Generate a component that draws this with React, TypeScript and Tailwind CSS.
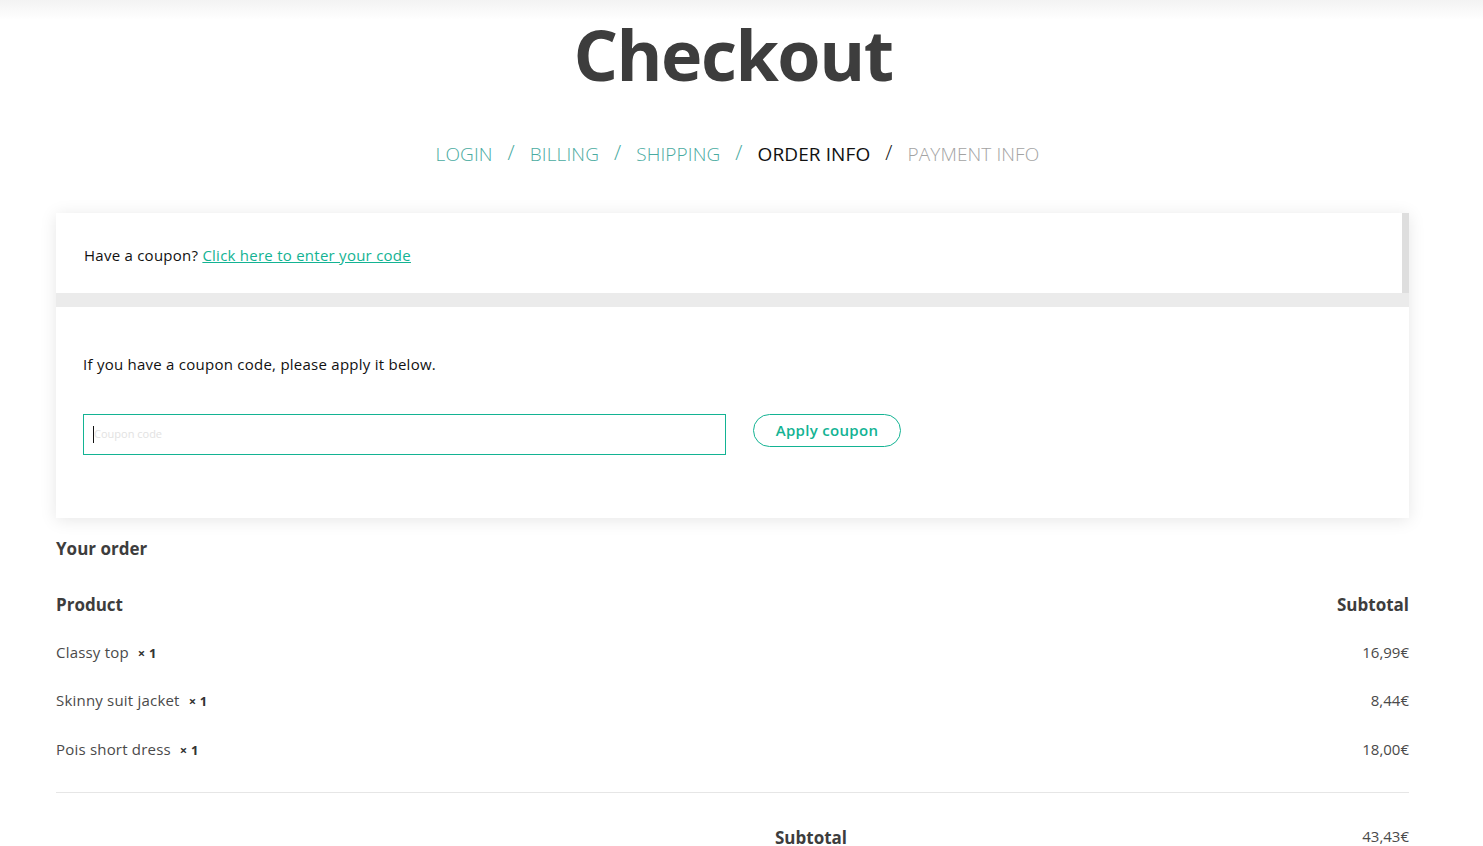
import { FC } from 'react';

const items = [
  { name: 'Classy top', price: '16,99€' },
  { name: 'Skinny suit jacket', price: '8,44€' },
  { name: 'Pois short dress', price: '18,00€' },
];

const steps = [
  { label: 'LOGIN', cls: 'text-[#4aaba1] font-light' },
  { label: 'BILLING', cls: 'text-[#4aaba1] font-light' },
  { label: 'SHIPPING', cls: 'text-[#4aaba1] font-light' },
  { label: 'ORDER INFO', cls: 'text-[#111111] font-normal' },
  { label: 'PAYMENT INFO', cls: 'text-[#a3a3a3] font-light' },
];

const App: FC = () => {
  return (
    <div
      className="min-h-screen bg-white text-[#333333]"
      style={{ fontFamily: '"Open Sans", "Noto Sans", Arial, sans-serif' }}
    >
      {/* faint header shadow */}
      <div className="h-[20px] bg-gradient-to-b from-[#f3f3f3] to-white" />

      <h1 className="pr-[17px] text-center text-[70px] font-bold leading-none text-[#3d3d3d] -mt-[1px] tracking-[-1.5px]">
        Checkout
      </h1>

      {/* Breadcrumb */}
      <nav className="pr-[8px] mt-[51px] flex justify-center items-center text-[19px] tracking-[0.1px]">
        {steps.map((s, i) => (
          <div key={s.label} className="flex items-center">
            <span className={s.cls}>{s.label}</span>
            {i < steps.length - 1 && (
              <span className={`mx-[15px] text-[21px] font-light -mt-[4px] ${i === 3 ? 'text-[#111]' : 'text-[#4aaba1]'}`}>/</span>
            )}
          </div>
        ))}
      </nav>

      <div className="mx-[56px] w-[1353px] mt-[44px]">
        {/* Coupon toggle + form */}
        <div className="shadow-[0_2px_16px_rgba(0,0,0,0.10)]">
          <div className="flex bg-[#ebebeb]">
            <div className="flex-1 bg-white h-[80px] flex items-center px-[28px] pt-[5px] text-[15px] tracking-[0.25px] text-[#111]">
              <span>Have a coupon?&nbsp;</span>
              <a href="#" className="text-[#13b393] underline">Click here to enter your code</a>
            </div>
            <div className="w-[7px] bg-[#dedede]" />
          </div>
          <div className="h-[14px] bg-[#ebebeb]" />
          <div className="bg-white h-[211px] px-[27px] pt-[46px]">
            <p className="text-[15px] tracking-[0.25px] text-[#111]">If you have a coupon code, please apply it below.</p>
            <div className="mt-[39px] flex items-start gap-[27px]">
              <div className="w-[643px] h-[41px] border-[1px] border-solid border-[#13b393] flex items-center px-[9px]">
                <span className="w-px h-[17px] bg-[#111]" />
                <span className="text-[11px] text-[#e2e2e2]">Coupon code</span>
              </div>
              <button className="h-[33px] w-[148px] rounded-full border-[1px] border-solid border-[#13b393] text-[#13b393] text-[15px] tracking-[0.3px] font-semibold">
                Apply coupon
              </button>
            </div>
          </div>
        </div>

        {/* Order */}
        <h3 className="mt-[18px] text-[17px] font-bold text-[#3d3d3d]">Your order</h3>

        <div className="mt-[31px] flex justify-between text-[17px] font-bold text-[#3d3d3d]">
          <span>Product</span>
          <span>Subtotal</span>
        </div>

        <div className="mt-[10px]">
          {items.map((it) => (
            <div key={it.name} className="h-[48.5px] flex items-center justify-between text-[15px] tracking-[0.2px] font-normal text-[#4a4a4a]">
              <span>
                {it.name}
                <strong className="font-bold text-[13px] ml-[9px] text-[#333]">× 1</strong>
              </span>
              <span className="tracking-normal">{it.price}</span>
            </div>
          ))}
        </div>

        <div className="mt-[19px] border-t border-[#e6e6e6]" />

        <div className="flex justify-between pl-[719px] pt-[32px] text-[#3d3d3d]">
          <span className="font-bold text-[17px]">Subtotal</span>
          <span className="font-normal text-[15px] text-[#4a4a4a]">43,43€</span>
        </div>
      </div>
    </div>
  );
};

export default App;
